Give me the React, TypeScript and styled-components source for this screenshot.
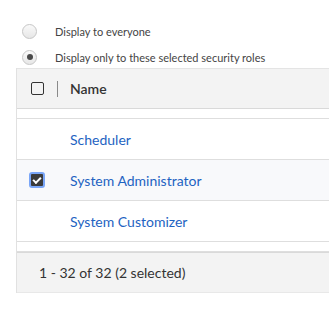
import React from 'react';
import styled, { createGlobalStyle } from 'styled-components';

const GlobalStyle = createGlobalStyle`
  html, body {
    margin: 0;
    padding: 0;
    background: #fff;
    overflow: hidden;
  }
  body {
    font-family: Lato, 'Open Sans', 'Liberation Sans', sans-serif;
  }
`;

const roles = [
  { name: 'Scheduler', selected: false },
  { name: 'System Administrator', selected: true },
  { name: 'System Customizer', selected: false },
];

const App: React.FC = () => {
  return (
    <>
      <GlobalStyle />
      <Page>
        <RadioGroup>
          <RadioRow>
            <Radio />
            <RadioLabel>Display to everyone</RadioLabel>
          </RadioRow>
          <RadioRow>
            <Radio checked />
            <RadioLabel>Display only to these selected security roles</RadioLabel>
          </RadioRow>
        </RadioGroup>
        <Grid>
          <Header>
            <CheckCell>
              <Checkbox />
            </CheckCell>
            <Divider />
            <HeaderText>Name</HeaderText>
          </Header>
          <Spacer />
          {roles.map((r) => (
            <Row key={r.name} selected={r.selected}>
              <CheckCell>{r.selected && <Checkbox checked />}</CheckCell>
              <RoleLink>{r.name}</RoleLink>
            </Row>
          ))}
          <Spacer />
          <Footer>1 - 32 of 32 (2 selected)</Footer>
        </Grid>
      </Page>
    </>
  );
};

export default App;

// 페이지
const Page = styled.div`
  width: 329px;
  height: 323px;
  padding-top: 23px;
  box-sizing: border-box;
  overflow: hidden;
`;

// 라디오 그룹
const RadioGroup = styled.div`
  display: flex;
  flex-direction: column;
  gap: 10px;
  padding-left: 22px;
`;

const RadioRow = styled.div`
  display: flex;
  align-items: center;
  height: 16px;
  gap: 18px;
`;

const Radio = styled.span<{ checked?: boolean }>`
  width: 13px;
  height: 13px;
  border-radius: 50%;
  border: 1px solid #c6c6c6;
  background: linear-gradient(#fafafa, #e6e6e6);
  display: flex;
  align-items: center;
  justify-content: center;
  &::after {
    content: '';
    display: ${(p) => (p.checked ? 'block' : 'none')};
    width: 6px;
    height: 6px;
    border-radius: 50%;
    background: #4a4a4a;
  }
`;

const RadioLabel = styled.span`
  font-size: 11px;
  color: #444;
`;

// 그리드
const Grid = styled.div`
  margin-left: 16px;
  margin-top: 3px;
  width: 340px;
  border-left: 1px solid #e1e1e1;
`;

const Header = styled.div`
  height: 39px;
  background: #f3f3f3;
  border-top: 1px solid #e4e4e4;
  border-bottom: 1px solid #d9d9d9;
  display: flex;
  align-items: center;
`;

const CheckCell = styled.div`
  width: 40px;
  padding-left: 14px;
  box-sizing: border-box;
  display: flex;
  align-items: center;
`;

const Checkbox = styled.span<{ checked?: boolean }>`
  width: 13px;
  height: 13px;
  box-sizing: border-box;
  border-radius: 2px;
  border: 1px solid #333;
  display: flex;
  align-items: center;
  justify-content: center;
  ${(p) =>
    p.checked &&
    `
    width: 16px;
    height: 16px;
    margin-left: -2px;
    border: 2px solid #7aa6f7;
    border-radius: 3px;
    background: #3b3b3b;
    &::after {
      content: '';
      width: 6px;
      height: 3px;
      border-left: 2px solid #fff;
      border-bottom: 2px solid #fff;
      transform: translateY(-1px) rotate(-45deg);
    }
  `}
`;

const Divider = styled.span`
  width: 1px;
  height: 16px;
  background: #8a8a8a;
`;

const HeaderText = styled.span`
  margin-left: 12px;
  font-size: 14px;
  font-weight: 600;
  color: #333;
`;

const Spacer = styled.div`
  height: 9px;
  border-bottom: 1px solid #dedede;
`;

const Row = styled.div<{ selected?: boolean }>`
  height: 40px;
  border-bottom: 1px solid #dedede;
  background: ${(p) => (p.selected ? '#f8f9fb' : '#fff')};
  display: flex;
  align-items: center;
`;

const RoleLink = styled.span`
  margin-left: 13px;
  font-size: 14px;
  color: #1e63c2;
`;

const Footer = styled.div`
  height: 39px;
  background: #f3f3f3;
  border-top: 1px solid #d9d9d9;
  border-bottom: 1px solid #e8e8e8;
  display: flex;
  align-items: center;
  padding-left: 22px;
  font-size: 14px;
  color: #333;
`;
